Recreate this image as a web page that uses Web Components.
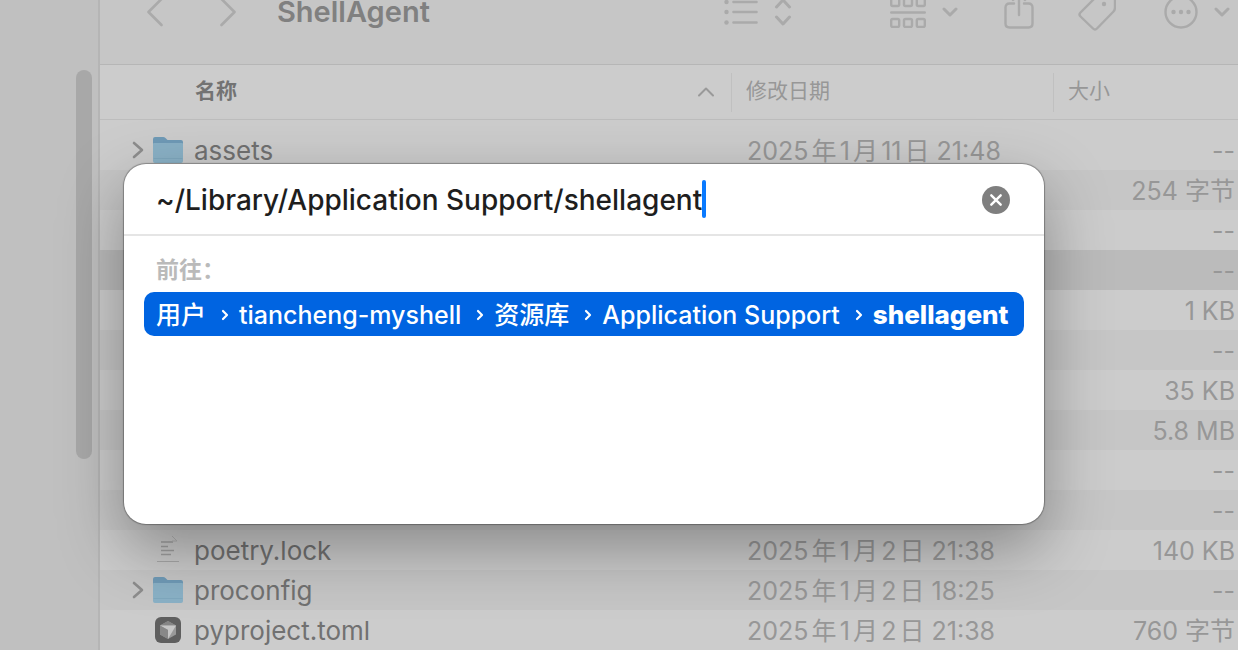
<!DOCTYPE html>
<html lang="zh-CN">
<head>
<meta charset="utf-8">
<title>ShellAgent</title>
<style>
  body { margin: 0; height: 100vh; overflow: hidden; background: #ccc; font-family: Inter, "Noto Sans CJK SC", sans-serif; }
</style>
</head>
<body>
<finder-window></finder-window>
<script>
const define = (name, html, setup) => customElements.define(name, class extends HTMLElement {
  connectedCallback() {
    if (this.shadowRoot) return;
    const t = document.createElement('template');
    t.innerHTML = html;
    this.attachShadow({ mode: 'open' }).append(t.content.cloneNode(true));
    if (setup) setup(this, this.shadowRoot);
  }
});

const ICONS = {
  back: [18, 32, '<path d="M15.500 3 2.500 16l13 13" stroke-width="2.600"/>'],
  forward: [18, 32, '<path d="M2.500 3l13 13-13 13" stroke-width="2.600"/>'],
  list: [34, 26, '<path d="M9.500 3h23M9.500 13h23M9.500 23.500h23" stroke-width="2.600"/><g fill="currentColor" stroke="none"><circle cx="2.500" cy="3" r="2.200"/><circle cx="2.500" cy="13" r="2.200"/><circle cx="2.500" cy="23.500" r="2.200"/></g>'],
  updown: [18, 30, '<path d="M2.500 10 9 3l6.500 7M2.500 20 9 27l6.500-7" stroke-width="3"/>'],
  grid: [36, 32, '<g stroke-width="2.400"><rect x="1.200" y="2" width="8" height="8" rx="1.500"/><rect x="14" y="2" width="8" height="8" rx="1.500"/><rect x="26.800" y="2" width="8" height="8" rx="1.500"/><path d="M1.200 16.500h33.600"/><rect x="1.200" y="23" width="8" height="8" rx="1.500"/><rect x="14" y="23" width="8" height="8" rx="1.500"/><rect x="26.800" y="23" width="8" height="8" rx="1.500"/></g>'],
  down: [16, 12, '<path d="M2 3l6 6 6-6" stroke-width="3"/>'],
  share: [30, 36, '<path d="M10 9.500H5.500q-4 0-4 4v16q0 4 4 4h19q4 0 4-4v-16q0-4-4-4H20M15 21V0M9 6l6-6 6 6" stroke-width="2.400"/>'],
  tag: [38, 40, '<path d="M2.500 20.500 19.500 3.500q1.500-1.500 4-1.500H33q4 0 4 4v9.500q0 2.500-1.500 4L19 36.500q-2 2-4 0L2.500 24.500q-2-2 0-4z" stroke-width="2.400"/><circle cx="26" cy="12" r="2.200" fill="currentColor" stroke="none"/>'],
  more: [34, 34, '<circle cx="17" cy="17" r="15.500" stroke-width="2.400"/><g fill="currentColor" stroke="none"><circle cx="9.500" cy="17" r="2.200"/><circle cx="17" cy="17" r="2.200"/><circle cx="24.500" cy="17" r="2.200"/></g>'],
  disclose: [12, 18, '<path d="M2 2l8 7-8 7" stroke-width="2.600"/>'],
  sort: [18, 10, '<path d="M2 8.500 9 1.500 16 8.500" stroke="#999" stroke-width="2"/>'],
  crumb: [8, 12, '<path d="M2 2l4 4-4 4" stroke-width="2.200"/>'],
  clear: [28, 28, '<circle cx="14" cy="14" r="14" fill="#7f7f7f" stroke="none"/><path d="M9.300 9.300l9.400 9.400M18.700 9.300l-9.400 9.400" stroke="#fff" stroke-width="2.400"/>'],
  folder: [30, 28, '<g stroke="none"><path d="M0 3q0-2 2-2h8q1.500 0 2.500 1l2 2H28q2 0 2 2v5H0z" fill="#6f9ab6"/><path d="M0 8q0-1 1-1h28q1 0 1 1v17q0 2-2 2H2q-2 0-2-2z" fill="#8ab1c6"/><path d="M1 22.500h28" stroke="#7fa8be" stroke-width="1"/></g>'],
  file: [30, 28, '<g stroke="#9f9f9f" stroke-width="1.500" stroke-linecap="butt"><path d="M8 6h12M8 10.500h7M8 14.500h13M8 18.500h10"/><path d="M4 25.500h22" stroke="#a8a8a8" stroke-width="1"/><path d="M19 0l5 5h-5" stroke="#b2b2b2" stroke-width="1"/></g>'],
  cube: [30, 28, '<g stroke="none"><rect x="2" y="1" width="26" height="26" rx="6" fill="#5f5f5f"/><path d="M15 5l8 4.500v9L15 23l-8-4.500v-9z" fill="#999"/><path d="M15 5l8 4.500H7z" fill="#858585"/><path d="M7 9.500h16L15 23v-9z" fill="#c6c6c6"/><path d="M7 9.500l8 4.500v9l-8-4.500z" fill="#888"/></g>']
};
define('ui-icon', `<style>:host{display:block;flex:none}svg{display:block;fill:none;stroke:currentColor;stroke-linecap:round;stroke-linejoin:round}</style>`, (el, root) => {
  const [w, h, body] = ICONS[el.getAttribute('name')];
  root.innerHTML += `<svg width="${w}" height="${h}" viewBox="0 0 ${w} ${h}" aria-hidden="true">${body}</svg>`;
});

define('side-bar', `<style>
  :host{display:block;box-sizing:border-box;width:100px;flex:none;padding:70px 6px 0 0;background:#c0c0c0;border-right:2px solid #b5b5b5}
  .thumb{height:389px;width:16px;margin-left:auto;border-radius:8px;background:#a8a8a8}
</style><div class="thumb"></div>`);

define('tool-bar', `<style>
  :host{display:flex;align-items:center;box-sizing:border-box;height:105px;margin-top:-40px;padding:0 8px 0 46px;background:#c6c6c6;border-bottom:1px solid #b6b6b6;color:#aaa}
  button{display:flex;align-items:center;background:none;border:0;padding:0;margin:0;color:inherit;font:inherit}
  h1{margin:0 auto 0 0;font-size:29px;line-height:24px;font-weight:600;color:#808080}
  .fwd{margin:0 40px 0 55px}.view{gap:16px}.group{gap:16px;margin:0 46px 0 98px}
  .tag{margin:0 48px 0 44px}.more{gap:16px}
</style>
<button aria-label="后退"><ui-icon name="back"></ui-icon></button>
<button class="fwd" aria-label="前进"><ui-icon name="forward"></ui-icon></button>
<h1>ShellAgent</h1>
<button class="view" aria-label="显示"><ui-icon name="list"></ui-icon><ui-icon name="updown"></ui-icon></button>
<button class="group" aria-label="分组"><ui-icon name="grid"></ui-icon><ui-icon name="down"></ui-icon></button>
<button aria-label="共享"><ui-icon name="share"></ui-icon></button>
<button class="tag" aria-label="标签"><ui-icon name="tag"></ui-icon></button>
<button class="more" aria-label="更多"><ui-icon name="more"></ui-icon><ui-icon name="down"></ui-icon></button>`);

const ROWS = [
  ['folder', 'assets', '2025年1月11日 21:48', '--'],
  ['', '', '', '254 字节'], ['', '', '', '--'], ['', '', '', '--', 'selected'],
  ['', '', '', '1 KB'], ['', '', '', '--'], ['', '', '', '35 KB'],
  ['', '', '', '5.8 MB'], ['', '', '', '--'], ['', '', '', '--'],
  ['file', 'poetry.lock', '2025年1月2日 21:38', '140 KB'],
  ['folder', 'proconfig', '2025年1月2日 18:25', '--'],
  ['cube', 'pyproject.toml', '2025年1月2日 21:38', '760 字节']
];
define('file-list', `<style>
  :host{display:block;background:#ccc;color:#979797}
  table{width:100%;table-layout:fixed;border-spacing:0;font-size:25px;line-height:38px;text-autospace:normal}
  .date{width:322px}.size{width:185px}
  th,td{padding:0;text-align:left;white-space:nowrap;box-sizing:border-box}
  th{height:55px;font-size:21px;line-height:34px;font-weight:400;border-bottom:1px solid #bdbdbd}
  th div{display:flex;align-items:center;justify-content:space-between;padding:0 16px;height:39px}
  th span{padding-bottom:2px}
  th:first-child{font-weight:600;color:#737373}
  th:first-child div{padding-left:95px}
  th + th div{border-left:1px solid #c0c0c0;padding-left:14px}
  tbody::before{content:"";display:block;height:10px}
  td{height:40px}
  tbody tr:nth-child(even) td{background:#c6c6c6}
  tbody tr.selected td{background:#bbb}
  td + td{padding:2px 0 0 16px}
  td:last-child{text-align:right;padding-right:3px}
  .name{display:flex;align-items:center;gap:10px;height:40px;padding-left:32px;font-size:26px;color:#717171}
  .name .open{width:12px;margin-right:-1px;color:#8d8d8d}
  .name .label{padding:2px 0 0 1px}
</style>
<table><colgroup><col><col class="date"><col class="size"></colgroup>
<thead><tr><th><div><span>名称</span><ui-icon name="sort"></ui-icon></div></th><th><div><span>修改日期</span></div></th><th><div><span>大小</span></div></th></tr></thead>
<tbody></tbody></table>`, (el, root) => {
  root.querySelector('tbody').innerHTML = ROWS.map(([icon, name, date, size, state]) => `<tr class="${state || ''}"><td>${name ? `<div class="name"><span class="open">${icon === 'folder' ? '<ui-icon name="disclose"></ui-icon>' : ''}</span><ui-icon name="${icon}"></ui-icon><span class="label">${name}</span></div>` : ''}</td><td>${date}</td><td>${size}</td></tr>`).join('');
});

define('path-crumbs', `<style>
  :host{display:flex;align-items:center;box-sizing:border-box;height:44px;padding:2px 12px 0;border-radius:10px;background:#0064e1;color:#fff;font-size:25px;line-height:42px;font-weight:500;white-space:nowrap}
  a{color:inherit;text-decoration:none}
  ui-icon{margin:0 10px 0 15px}
  a:last-child{font-size:26px;font-weight:800}
</style>
<a href="#users">用户</a><ui-icon name="crumb"></ui-icon><a href="#home">tiancheng-myshell</a><ui-icon name="crumb"></ui-icon><a href="#library">资源库</a><ui-icon name="crumb"></ui-icon><a href="#support">Application Support</a><ui-icon name="crumb"></ui-icon><a href="#shellagent">shellagent</a>`);

define('goto-dialog', `<style>
  :host{display:block;box-sizing:border-box;min-height:360px;border-radius:22px;background:#fff;box-shadow:0 0 1px 1px rgba(0,0,0,.3),0 24px 64px rgba(0,0,0,.34)}
  .field{display:flex;align-items:center;height:70px;padding:0 34px 0 32px;border-bottom:2px solid #e5e5e5}
  input{field-sizing:content;border:0;outline:0;padding:2px 0 0;margin:0;background:none;font-family:inherit;font-size:28px;line-height:36px;font-weight:500;color:#1e1e1e}
  .caret{width:4px;height:38px;border-radius:2px;background:#0a7aff}
  button{margin-left:auto;padding:2px 0 0;border:0;background:none}
  .body{padding:14px 20px}
  h2{margin:0 0 2px;padding-left:12px;font-size:23px;line-height:40px;font-weight:600;color:#bababa}
</style>
<div class="field"><input aria-label="前往文件夹" value="~/Library/Application Support/shellagent"><span class="caret"></span><button aria-label="清除"><ui-icon name="clear"></ui-icon></button></div>
<div class="body"><h2>前往：</h2><path-crumbs></path-crumbs></div>`);

define('finder-window', `<style>
  :host{display:flex;position:relative;min-height:100vh;overflow:hidden}
  main{flex:1;min-width:0}
  goto-dialog{position:absolute;left:124px;right:194px;top:164px}
</style>
<side-bar></side-bar><main><tool-bar></tool-bar><file-list></file-list></main><goto-dialog role="dialog" aria-label="前往文件夹"></goto-dialog>`);
</script>
</body>
</html>
